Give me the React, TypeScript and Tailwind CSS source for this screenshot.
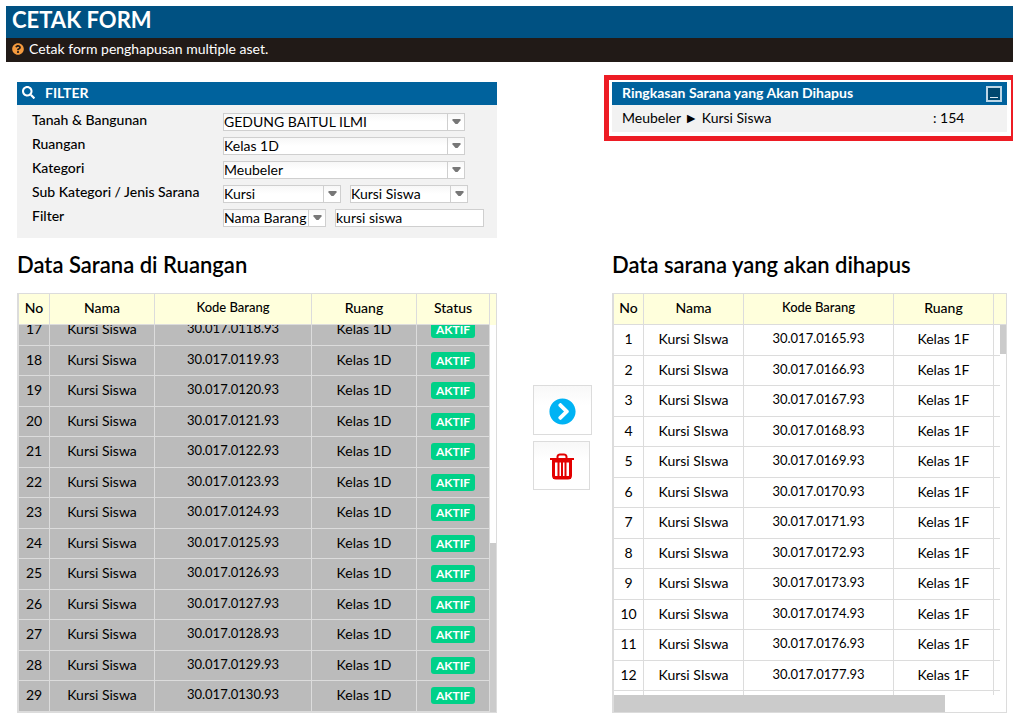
import { useState } from 'react';
import type { ReactNode } from 'react';
import { FaChevronCircleRight, FaQuestionCircle, FaSearch } from 'react-icons/fa';

interface Sarana {
  no: number;
  nama: string;
  kode: string;
  ruang: string;
}

const RUANGAN: Sarana[] = [
  118, 119, 120, 121, 122, 123, 124, 125, 126, 127, 128, 129, 130,
].map((n, i) => ({ no: 17 + i, nama: 'Kursi Siswa', kode: `30.017.0${n}.93`, ruang: 'Kelas 1D' }));

const DIHAPUS: Sarana[] = [
  165, 166, 167, 168, 169, 170, 171, 172, 173, 174, 176, 177, 178,
].map((n, i) => ({ no: 1 + i, nama: 'Kursi SIswa', kode: `30.017.0${n}.93`, ruang: 'Kelas 1F' }));

const th = 'h-[31px] px-0 pt-0 pb-0.5 border-r border-b border-[#dcdcdc] font-medium text-center';
const td = 'px-0 pt-0 border-r border-b border-[#dcdcdc] text-center';

function Select({ id, label, options, className }: {
  id: string;
  label?: string;
  options: string[];
  className: string;
}) {
  return (
    <span className={`relative flex h-[18px] border border-[#cfcfcf] bg-linear-to-b from-[#f7f7f7] to-white to-50% ${className}`}>
      <select
        id={id}
        aria-label={label}
        className="w-full appearance-none bg-transparent pr-4 text-sm leading-4 outline-none"
      >
        {options.map((o) => <option key={o}>{o}</option>)}
      </select>
      <span className="pointer-events-none absolute inset-y-0 right-0 flex w-[17px] items-center justify-center border-l border-[#cfcfcf]">
        <svg width="9" height="6" viewBox="0 0 9 6" fill="#777777">
          <path d="M0.500 0h8v1.500L5.500 5h-2L0.500 1.500z" />
        </svg>
      </span>
    </span>
  );
}

function FilterRow({ label, htmlFor, children }: { label: string; htmlFor: string; children: ReactNode }) {
  return (
    <div className="flex h-6 items-center">
      <label htmlFor={htmlFor} className="w-[191px] shrink-0 pb-1 text-sm leading-5 font-medium">{label}</label>
      <div className="flex gap-[9px]">{children}</div>
    </div>
  );
}

function TabelRuangan() {
  const cols = (
    <>
      <col className="w-[31px]" />
      <col className="w-[105px]" />
      <col />
      <col className="w-[105px]" />
      <col className="w-[73px]" />
    </>
  );
  return (
    <div className="border border-l-2 border-[#dcdcdc]">
      <table className="w-full table-fixed border-separate border-spacing-0 bg-[#ffffdc]">
        <colgroup>{cols}<col className="w-1.5" /></colgroup>
        <thead>
          <tr>
            <th className={`${th} text-sm`}>No</th>
            <th className={`${th} text-sm`}>Nama</th>
            <th className={`${th} text-[13px]`}>Kode Barang</th>
            <th className={`${th} text-sm`}>Ruang</th>
            <th className={`${th} text-sm`}>Status</th>
            <th className="p-0" />
          </tr>
        </thead>
      </table>
      <div className="flex h-[387px]">
        <div className="flex h-full flex-1 flex-col justify-end overflow-hidden">
          <table className="w-full shrink-0 table-fixed border-separate border-spacing-0 bg-[#bbbbbb] leading-5">
            <colgroup>{cols}</colgroup>
            <tbody>
              {RUANGAN.map((s) => (
                <tr key={s.no} className="h-[30px] odd:h-[31px]">
                  <td className={`${td} pb-0.5 text-sm`}>{s.no}</td>
                  <td className={`${td} pb-0.5 text-sm`}>{s.nama}</td>
                  <td className={`${td} pb-1 text-[13px]`}>{s.kode}</td>
                  <td className={`${td} pb-0.5 text-sm`}>{s.ruang}</td>
                  <td className={`${td} pb-px`}>
                    <span className="mx-auto block h-[17px] w-11 rounded-[3px] bg-[#00d188] text-xs leading-[17px] font-bold text-white">
                      AKTIF
                    </span>
                  </td>
                </tr>
              ))}
            </tbody>
          </table>
        </div>
        {/* scrollbar */}
        <div className="flex w-1.5 flex-col justify-end">
          <div className="h-[169px] bg-[#cbcbcb]" />
        </div>
      </div>
    </div>
  );
}

function TabelDihapus() {
  const cols = (
    <>
      <col className="w-[30px]" />
      <col className="w-[100px]" />
      <col />
      <col className="w-[100px]" />
    </>
  );
  return (
    <div className="border border-l-2 border-[#dcdcdc]">
      <table className="w-full table-fixed border-separate border-spacing-0 bg-[#ffffdc]">
        <colgroup>{cols}<col className="w-3" /></colgroup>
        <thead>
          <tr>
            <th className={`${th} text-sm`}>No</th>
            <th className={`${th} text-sm`}>Nama</th>
            <th className={`${th} text-[13px]`}>Kode Barang</th>
            <th className={`${th} text-sm`}>Ruang</th>
            <th className="border-b border-[#dcdcdc] p-0" />
          </tr>
        </thead>
      </table>
      <div className="flex h-[370px]">
        <div className="h-full flex-1 overflow-hidden">
          <table className="w-full table-fixed border-separate border-spacing-0 leading-5">
            <colgroup>{cols}<col className="w-1.5" /></colgroup>
            <tbody>
              {DIHAPUS.map((s) => (
                <tr key={s.no} className="h-[30px] odd:h-[31px]">
                  <td className={`${td} pb-0.5 text-sm`}>{s.no}</td>
                  <td className={`${td} pb-0.5 text-sm`}>{s.nama}</td>
                  <td className={`${td} pb-1 text-[13px]`}>{s.kode}</td>
                  <td className={`${td} pb-0.5 text-sm`}>{s.ruang}</td>
                  <td className="border-b border-[#dcdcdc] p-0" />
                </tr>
              ))}
            </tbody>
          </table>
        </div>
        {/* scrollbar */}
        <div className="w-1.5">
          <div className="h-[29px] bg-[#cbcbcb]" />
        </div>
      </div>
      <div className="h-[17px]">
        <div className="h-full w-[84.5%] bg-[#cbcbcb]" />
      </div>
    </div>
  );
}

export default function App() {
  const [keyword, setKeyword] = useState('kursi siswa');
  const [open, setOpen] = useState(true);

  return (
    <div className="overflow-hidden bg-white pt-1.5 pb-[9px] pl-1.5 font-['Lato',sans-serif] text-black">
      <header>
        <h1 className="h-8 bg-[#005182] pl-1.5 text-[22px] leading-7 font-bold text-white">CETAK FORM</h1>
        <p className="flex h-6 items-center gap-[5px] bg-[#211a17] pb-0.5 pl-1.5 text-sm text-white">
          <FaQuestionCircle className="h-3 w-3 text-[#f59a3e]" />
          Cetak form penghapusan multiple aset.
        </p>
      </header>

      <main className="grid grid-cols-[480fr_115fr_395fr] pr-1.5 pl-[11px]">
        <section className="mt-5 bg-[#f2f2f2]">
          <h2 className="flex h-[23px] items-center gap-2.5 bg-[#00629d] pb-0.5 pl-[5px] text-sm font-bold text-white">
            <FaSearch className="h-[13px] w-[13px]" />
            FILTER
          </h2>
          <form className="pt-[5px] pb-2 pl-[15px]" onSubmit={(e) => e.preventDefault()}>
            <FilterRow label="Tanah & Bangunan" htmlFor="gedung">
              <Select id="gedung" options={['GEDUNG BAITUL ILMI']} className="w-[242px]" />
            </FilterRow>
            <FilterRow label="Ruangan" htmlFor="ruangan">
              <Select id="ruangan" options={['Kelas 1D']} className="w-[242px]" />
            </FilterRow>
            <FilterRow label="Kategori" htmlFor="kategori">
              <Select id="kategori" options={['Meubeler']} className="w-[242px]" />
            </FilterRow>
            <FilterRow label="Sub Kategori / Jenis Sarana" htmlFor="sub">
              <Select id="sub" options={['Kursi']} className="w-[118px]" />
              <Select id="jenis" label="Jenis Sarana" options={['Kursi Siswa']} className="w-[118px]" />
            </FilterRow>
            <FilterRow label="Filter" htmlFor="filter">
              <Select id="filter" options={['Nama Barang']} className="w-[103px]" />
              <input
                type="text"
                aria-label="Kata kunci"
                value={keyword}
                onChange={(e) => setKeyword(e.target.value)}
                className="h-[18px] w-[149px] border border-[#cfcfcf] bg-white pb-0.5 text-sm leading-4 outline-none"
              />
            </FilterRow>
          </form>
        </section>

        <section className="col-start-3 mt-[13px] -mr-1.5 -ml-2 self-start border-5 border-r-2 border-[#ed1c24] pt-0.5 pr-1 pb-1 pl-[3px]">
          <div className="flex h-[23px] items-center justify-between bg-[#00629d] pr-[5px] pl-2.5">
            <h2 className="pb-0.5 text-sm font-bold text-white">Ringkasan Sarana yang Akan Dihapus</h2>
            <button
              type="button"
              aria-label="Ciutkan ringkasan"
              onClick={() => setOpen(!open)}
              className="flex h-4 w-4 items-end justify-center border-2 border-[#bcd6e6] bg-[#00486f] pb-0.5"
            >
              <span className="h-px w-2 bg-[#d9e8f1]" />
            </button>
          </div>
          {open && (
            <div className="flex h-[27px] bg-[#f2f2f2] pl-2.5 text-sm leading-[26px]">
              <span className="flex-1">Meubeler ► Kursi Siswa</span>
              <span className="w-[74px]">: 154</span>
            </div>
          )}
        </section>

        <section className="col-start-1">
          <h2 className="mt-[11px] mb-3 text-[22px] leading-8 font-semibold">Data Sarana di Ruangan</h2>
          <TabelRuangan />
        </section>

        <div className="flex flex-col items-start gap-1.5 pt-[147px] pl-9">
          <button
            type="button"
            aria-label="Pindahkan"
            className="flex h-[50px] w-[59px] items-center justify-center border border-[#dcdcdc] bg-linear-to-b from-[#f8f8f8] to-white to-40% pt-0.5"
          >
            <FaChevronCircleRight className="h-[27px] w-[27px] text-[#00b3f4]" />
          </button>
          <button
            type="button"
            aria-label="Hapus"
            className="flex h-[49px] w-[57px] items-center justify-center border border-[#dcdcdc] bg-linear-to-b from-[#f8f8f8] to-white to-40% pt-0.5"
          >
            <svg width="24" height="27" viewBox="0 0 24 27" fill="none" stroke="#e30000">
              <path d="M7.500 5V3.500Q8 1.500 10 1.500h4q2 0 2.500 2V5" strokeWidth="2" />
              <path d="M0 6h24" strokeWidth="2" />
              <path d="M3.500 7v15.500q0 2.500 2.500 2.500h12q2.500 0 2.500-2.500V7" strokeWidth="3" />
              <path d="M3 8h18M3 24.500h18" strokeWidth="3" />
              <path d="M8.500 8v16M12 8v16M15.500 8v16" strokeWidth="2" />
            </svg>
          </button>
        </div>

        <section>
          <h2 className="mt-[11px] mb-3 text-[22px] leading-8 font-semibold">Data sarana yang akan dihapus</h2>
          <TabelDihapus />
        </section>
      </main>
    </div>
  );
}
